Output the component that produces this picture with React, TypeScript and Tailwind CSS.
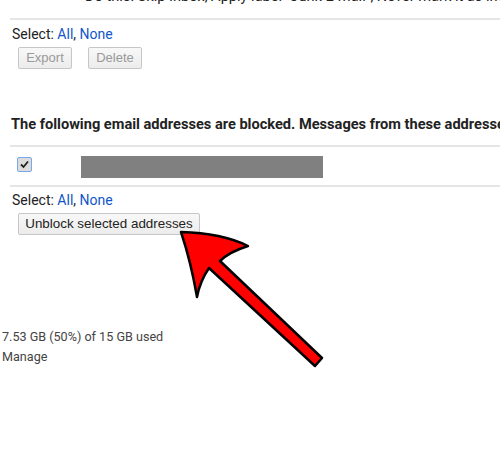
import React from "react";

const Btn = ({ children, disabled, className = "" }: { children: React.ReactNode; disabled?: boolean; className?: string }) => (
  <div
    className={`h-[22px] flex items-center justify-center border border-[#c6c6c6] rounded-[2px] bg-gradient-to-b from-[#f8f8f8] to-[#ececec] ${
      disabled ? "text-[#999] text-[13px]" : "text-[#222] text-[13.4px]"
    } ${className}`}
    style={{ fontFamily: "Arial, 'Liberation Sans', sans-serif" }}
  >
    {children}
  </div>
);

export default function App() {
  return (
    <div
      className="relative w-[500px] h-[455px] overflow-hidden bg-white text-[#222]"
      style={{ fontFamily: "Roboto, 'Liberation Sans', sans-serif" }}
    >
      <div className="pl-[85px] -mt-[12px] h-[17px] text-[14.6px] leading-[17px] whitespace-nowrap">
        Do this: Skip Inbox, Apply label "Junk E-mail", Never mark it as important
      </div>
      <div className="ml-[10px] mt-[13px] h-[2px] bg-[#e5e5e5]" />
      <div className="pl-[12px] mt-[5px] text-[14px] leading-[18px]">
        Select: <span className="text-[#15c]">All</span>, <span className="text-[#15c]">None</span>
      </div>
      <div className="flex gap-[16px] pl-[18px] mt-[4px]">
        <Btn disabled className="w-[54px]">Export</Btn>
        <Btn disabled className="w-[54px]">Delete</Btn>
      </div>
      <div className="pl-[11px] mt-[45px] text-[14.6px] leading-[20px] font-bold whitespace-nowrap text-[#222]">
        The following email addresses are blocked. Messages from these addresses will be marked as spam
      </div>
      <div className="ml-[10px] mt-[11px] h-[2px] bg-[#e5e5e5]" />
      <div className="flex items-start h-[38px] pt-[9px] pl-[17px]">
        <div className="w-[15px] h-[15px] mt-[1px] rounded-[2px] border border-[#7aa7e8] bg-[#dcdcdc] flex items-center justify-center">
          <svg width="11" height="11" viewBox="0 0 11 11">
            <path d="M2 5.5 L4.5 8 L9 2.5" fill="none" stroke="#222" strokeWidth="1.8" />
          </svg>
        </div>
        <div className="ml-[49px] w-[242px] h-[22px] bg-[#808080]" />
      </div>
      <div className="ml-[10px] h-[2px] bg-[#e5e5e5]" />
      <div className="pl-[12px] mt-[4px] text-[14px] leading-[18px]">
        Select: <span className="text-[#15c]">All</span>, <span className="text-[#15c]">None</span>
      </div>
      <div className="pl-[18px] mt-[4px]">
        <Btn className="w-[182px]">Unblock selected addresses</Btn>
      </div>
      <div className="pl-[2px] mt-[92px] text-[12.6px] leading-[20px] text-[#444]">
        <div>7.53 GB (50%) of 15 GB used</div>
        <div>Manage</div>
      </div>
      <svg className="absolute left-0 top-0 pointer-events-none" width="500" height="455" viewBox="0 0 500 455">
        <path
          d="M181,232 Q222,233 248,246 Q229,252 220,261 L322,358 L315,366 L209,268 Q200,281 197,297 Q191,262 181,232 Z"
          fill="#ff0000"
          stroke="#000"
          strokeWidth="2.5"
          strokeLinejoin="round"
        />
      </svg>
    </div>
  );
}
